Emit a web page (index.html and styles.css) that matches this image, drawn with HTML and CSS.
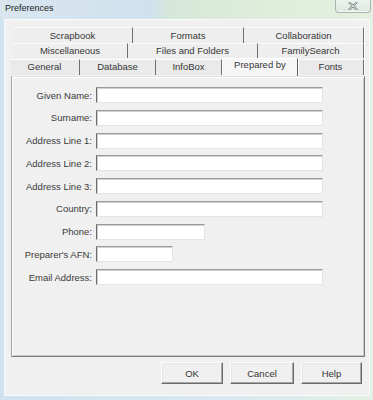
FILE: index.html
```html
<!DOCTYPE html>
<html lang="en">
<head>
    <meta charset="UTF-8">
    <meta name="viewport" content="width=device-width, initial-scale=1.0">
    <title>Preferences</title>
    <link rel="stylesheet" href="styles.css">
</head>
<body>
    <div class="window">
        <div class="titlebar">
            <span class="title">Preferences</span>
            <div class="close">
                <svg width="10" height="8" viewBox="0 0 10 8">
                    <path d="M1.5 0.8 L8.5 7.2 M8.5 0.8 L1.5 7.2" stroke="#7d8a8d" stroke-width="2.2" stroke-linecap="round"/>
                    <path d="M1.5 0.8 L8.5 7.2 M8.5 0.8 L1.5 7.2" stroke="#eef2ef" stroke-width="0.8" stroke-linecap="round"/>
                </svg>
            </div>
        </div>
        <div class="dialog">
            <div class="tabs">
                <div class="tab-row row-back">
                    <div class="tab" style="width:120px">Scrapbook</div>
                    <div class="tab" style="width:111px">Formats</div>
                    <div class="tab" style="width:120px">Collaboration</div>
                </div>
                <div class="tab-row row-mid">
                    <div class="tab" style="width:115px">Miscellaneous</div>
                    <div class="tab" style="width:130px">Files and Folders</div>
                    <div class="tab" style="width:106px">FamilySearch</div>
                </div>
                <div class="tab-row row-front">
                    <div class="tab" style="width:70px">General</div>
                    <div class="tab" style="width:76px">Database</div>
                    <div class="tab" style="width:66px">InfoBox</div>
                    <div class="tab selected" style="width:76px">Prepared by</div>
                    <div class="tab" style="width:66px">Fonts</div>
                </div>
            </div>
            <div class="panel">
                <form class="fields">
                    <label for="given">Given Name:</label>
                    <input type="text" id="given" class="wide">
                    <label for="surname">Surname:</label>
                    <input type="text" id="surname" class="wide">
                    <label for="addr1">Address Line 1:</label>
                    <input type="text" id="addr1" class="wide">
                    <label for="addr2">Address Line 2:</label>
                    <input type="text" id="addr2" class="wide">
                    <label for="addr3">Address Line 3:</label>
                    <input type="text" id="addr3" class="wide">
                    <label for="country">Country:</label>
                    <input type="text" id="country" class="wide">
                    <label for="phone">Phone:</label>
                    <input type="text" id="phone" class="medium">
                    <label for="afn">Preparer's AFN:</label>
                    <input type="text" id="afn" class="short">
                    <label for="email">Email Address:</label>
                    <input type="text" id="email" class="wide">
                </form>
            </div>
            <div class="buttons">
                <button class="ok">OK</button>
                <button class="cancel">Cancel</button>
                <button class="help">Help</button>
            </div>
        </div>
    </div>
</body>
</html>
```
FILE: styles.css
```css
body {
    margin: 0;
    padding: 0;
    font-family: "Liberation Sans", Arial, sans-serif;
    font-size: 9.5px;
    color: #363636;
    overflow: hidden;
}
.window {
    width: 373px;
    height: 400px;
    display: flex;
    flex-direction: column;
    background: linear-gradient(90deg, #cfe2f0 0%, #d8e9f2 60%, #e3f0e4 100%);
}
.titlebar {
    height: 19px;
    display: flex;
    align-items: flex-start;
    background: linear-gradient(90deg, #d9e6f0 0%, #d0e1ed 40%, #d6e8da 46%, #deedda 70%, #e4f0e0 100%);
}
.title {
    flex: 1;
    padding: 3px 0 0 5px;
    font-size: 9px;
    line-height: 11px;
    color: #1c1c1c;
}
.close {
    width: 34px;
    height: 12px;
    margin-right: 2px;
    display: flex;
    align-items: center;
    justify-content: center;
    border: 1px solid #a9b6b4;
    border-top: none;
    border-radius: 0 0 4px 4px;
    background: linear-gradient(#eef3ee, #dfe8df);
    box-shadow: inset 0 -1px 0 #f6f9f6;
}
.dialog {
    flex: 1;
    margin: 0 3px 4px 4px;
    background-color: #f0f0f0;
    border: 1px solid #fafafa;
    display: flex;
    flex-direction: column;
}
.tabs {
    padding-top: 7px;
}
.tab-row {
    display: flex;
}
.row-back {
    margin-left: 8px;
    height: 16px;
}
.row-mid {
    margin-left: 8px;
    height: 15px;
}
.row-front {
    margin-left: 5px;
    height: 18px;
    align-items: flex-start;
}
.tab {
    box-sizing: border-box;
    height: 100%;
    text-align: center;
    line-height: 15px;
    background-color: #eeeeee;
    border-top: 1px solid #fbfbfb;
    border-right: 1px solid #6f6f6f;
    box-shadow: 1px 0 0 #ffffff;
}
.row-mid .tab {
    line-height: 14px;
}
.row-front .tab {
    height: 16px;
    margin-top: 1px;
    line-height: 13px;
    background-color: #eaeaea;
}
.row-front .tab.selected {
    height: 18px;
    margin-top: 0;
    line-height: 11px;
    background-color: #f6f6f6;
    border-top: 1px solid #ffffff;
    border-left: 1px solid #ffffff;
    border-right: 1px solid #5e5e5e;
    position: relative;
    z-index: 1;
}
.panel {
    margin-left: 6px;
    width: 354px;
    height: 281px;
    box-sizing: border-box;
    background-color: #f0f0f0;
    border: 1px solid;
    border-color: #e2e2e2 #7a7a7a #7a7a7a #a0a0a0;
    box-shadow: inset 1px 1px 0 #ffffff, inset -1px -1px 0 #c8c8c8;
}
.fields {
    display: grid;
    grid-template-columns: 80px auto;
    column-gap: 4px;
    row-gap: 6.75px;
    padding-top: 10px;
    margin: 0;
}
.fields label {
    text-align: right;
    align-self: center;
    white-space: nowrap;
    color: #3a3a3a;
}
.fields input {
    justify-self: start;
    box-sizing: border-box;
    height: 16px;
    margin: 0;
    padding: 0 2px;
    background-color: #fff;
    border: 1px solid;
    border-color: #9a9a9a #e4e4e4 #e4e4e4 #6a6a6a;
    box-shadow: inset 1px 1px 0 #d0d0d0;
    font-family: inherit;
    font-size: inherit;
}
.fields input.wide {
    width: 227px;
}
.fields input.medium {
    width: 109px;
}
.fields input.short {
    width: 77px;
}
.buttons {
    display: flex;
    justify-content: flex-end;
    gap: 7px;
    margin: 5px 7px 0 0;
}
.buttons button {
    height: 22px;
    box-sizing: border-box;
    padding: 0;
    background-color: #f0f0f0;
    border: 1px solid;
    border-color: #fdfdfd #6a6a6a #6a6a6a #fdfdfd;
    box-shadow: inset -1px -1px 0 #a8a8a8, inset 1px 1px 0 #e6e6e6;
    font-family: inherit;
    font-size: inherit;
    color: #333;
}
.buttons .ok {
    width: 62px;
}
.buttons .cancel {
    width: 64px;
}
.buttons .help {
    width: 61px;
}
```
